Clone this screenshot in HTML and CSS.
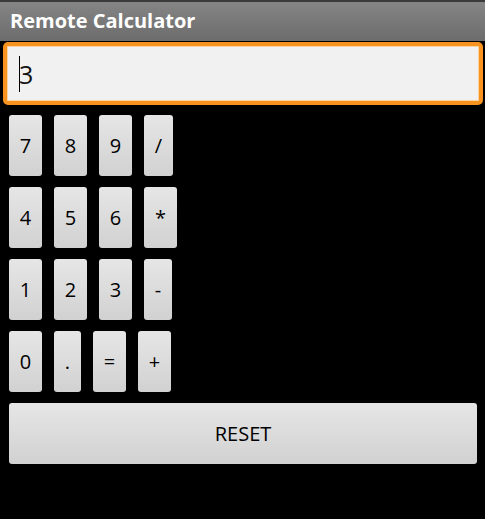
FILE: index.html
```html
<!DOCTYPE html>
<html>
<head>
<meta charset="utf-8">
<link rel="stylesheet" href="styles.css">
</head>
<body>
<div class="titlebar">Remote Calculator</div>
<div class="field"><span class="cursor"></span><span class="value">3</span></div>
<div class="keys">
  <div class="row"><button class="key">7</button><button class="key">8</button><button class="key">9</button><button class="key k-slash">/</button></div>
  <div class="row"><button class="key">4</button><button class="key">5</button><button class="key">6</button><button class="key">*</button></div>
  <div class="row"><button class="key">1</button><button class="key">2</button><button class="key">3</button><button class="key k-minus">-</button></div>
  <div class="row"><button class="key">0</button><button class="key k-dot">.</button><button class="key">=</button><button class="key">+</button></div>
  <button class="key reset">RESET</button>
</div>
</body>
</html>
```
FILE: styles.css
```css
html, body {
  margin: 0;
  padding: 0;
  background: #000;
  font-family: "Open Sans", "DejaVu Sans", sans-serif;
}
.titlebar {
  box-sizing: border-box;
  height: 41px;
  border-top: 2px solid #3a3a3a;
  background: linear-gradient(#858585, #6c6c6c);
  color: #fff;
  font-weight: bold;
  font-size: 20px;
  line-height: 38px;
  padding-left: 10px;
}
.field {
  box-sizing: border-box;
  margin: 1px 2px 0 3px;
  height: 63px;
  border: 4px solid #f7931e;
  border-radius: 5px;
  background: #f1f1f1;
  display: flex;
  align-items: center;
  padding-left: 12px;
  box-shadow: inset 0 0 0 1px #fbd3a0;
}
.cursor {
  display: block;
  width: 1px;
  height: 36px;
  background: #000;
  margin-right: -1px;
}
.value {
  font-size: 25px;
  color: #111;
  line-height: 36px;
}
.keys {
  padding: 10px 8px 0 9px;
  display: flex;
  flex-direction: column;
  gap: 11px;
}
.row {
  display: flex;
  gap: 12px;
}
.key {
  width: 33px;
  height: 61px;
  padding: 0;
  border: none;
  border-radius: 3px;
  background: linear-gradient(#e6e6e6, #d1d1d1);
  color: #000;
  font-family: "Open Sans", "DejaVu Sans", sans-serif;
  font-size: 20px;
  line-height: 61px;
  margin: 0;
}
.k-slash {
  width: 29px;
}
.k-minus {
  width: 28px;
}
.k-dot {
  width: 27px;
}
.reset {
  width: 468px;
}
```
